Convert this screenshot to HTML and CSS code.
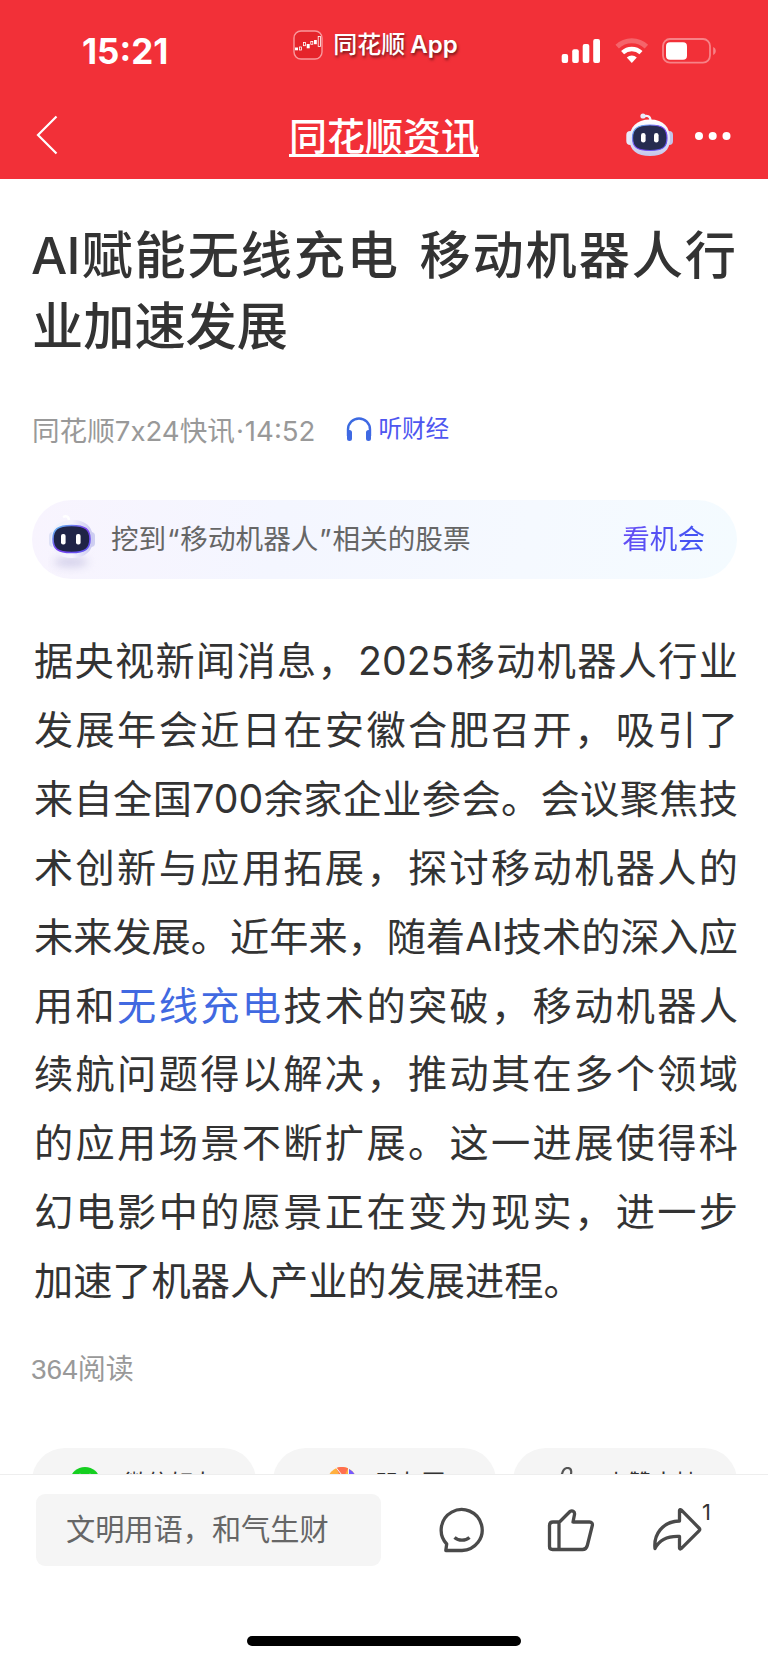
FILE: index.html
```html
<!DOCTYPE html>
<html lang="zh-CN">
<head>
<meta charset="utf-8">
<title>同花顺资讯</title>
<link rel="stylesheet" href="styles.css">
</head>
<body>
  <svg class="defs" width="0" height="0">
    <defs>
      <linearGradient id="shell" x1="0" y1="0" x2="0" y2="1">
        <stop offset="0" stop-color="#ffffff"/>
        <stop offset="0.5" stop-color="#e8e8f8"/>
        <stop offset="1" stop-color="#c4c6ec"/>
      </linearGradient>
      <linearGradient id="shell-light" x1="0" y1="0" x2="1" y2="0">
        <stop offset="0" stop-color="#eef0fc"/>
        <stop offset="0.5" stop-color="#f4f3fd"/>
        <stop offset="1" stop-color="#c9c8f0"/>
      </linearGradient>
      <linearGradient id="rim" x1="0" y1="0" x2="1" y2="1">
        <stop offset="0" stop-color="#5fc4f0"/>
        <stop offset="0.5" stop-color="#7a3ff0"/>
        <stop offset="1" stop-color="#5a5cf0"/>
      </linearGradient>
      <linearGradient id="phones" x1="0" y1="0" x2="1" y2="0">
        <stop offset="0" stop-color="#3a6be0"/>
        <stop offset="1" stop-color="#4068e4"/>
      </linearGradient>
    </defs>
  </svg>

  <div id="header">
    <div class="status-bar">
      <span class="clock">15:21</span>
      <div class="app-name">
        <svg width="30" height="30" viewBox="0 0 30 30">
          <rect x="1" y="1" width="28" height="28" rx="7" fill="#e5242b" stroke="#f9989c" stroke-width="1.4"/>
          <g fill="#fff">
            <rect x="2" y="17.5" width="3" height="2.8"/>
            <rect x="13.7" y="14" width="3" height="4.3"/>
            <rect x="21" y="10" width="2.8" height="4.2"/>
          </g>
          <g fill="none" stroke="#fff" stroke-width="0.8">
            <rect x="6.5" y="17" width="2" height="3"/>
            <rect x="10.4" y="12.5" width="2" height="3.2"/>
            <rect x="17.8" y="11.5" width="2" height="2.8"/>
            <rect x="25.2" y="6.5" width="2.2" height="10"/>
          </g>
        </svg>
        <span>同花顺<b>App</b></span>
      </div>
      <div class="signals">
        <svg width="40" height="26" viewBox="0 0 40 26" fill="#fff">
          <rect x="0.7" y="16" width="6.4" height="9" rx="2"/>
          <rect x="11.2" y="11.3" width="6.6" height="13.7" rx="2"/>
          <rect x="21.7" y="6" width="6.6" height="19" rx="2"/>
          <rect x="32.2" y="1" width="6.8" height="24" rx="2"/>
        </svg>
        <svg width="34" height="26" viewBox="0 0 34 26" fill="none">
          <path d="M2.2 8.6a21 21 0 0 1 29.2 0" stroke="#fff" stroke-opacity=".25" stroke-width="5"/>
          <path d="M7.6 14.6a13.4 13.4 0 0 1 18.4 0" stroke="#fff" stroke-width="4.4"/>
          <path d="M11.8 19.6a7.2 7.2 0 0 1 10 0l-5 5.4z" fill="#fff"/>
        </svg>
        <svg width="55" height="26" viewBox="0 0 55 26">
          <rect x="1" y="1" width="47" height="23.6" rx="7" fill="none" stroke="#fff" stroke-opacity=".4" stroke-width="1.8"/>
          <rect x="4" y="4.2" width="21" height="17.6" rx="4" fill="#fff"/>
          <path d="M51.2 9c3.4 1.4 3.4 6.4 0 8z" fill="#fff" fill-opacity=".4"/>
        </svg>
      </div>
    </div>

    <div class="nav-bar">
      <svg width="24" height="42" viewBox="0 0 24 42" fill="none" stroke="#fff" stroke-width="2.2">
        <path d="M21.5 2.5L3 21l18.5 18.5"/>
      </svg>
      <h1>同花顺资讯</h1>
      <div class="nav-actions">
        <svg width="48" height="46" viewBox="0 0 48 46">
          <path d="M17 4.5c4-1.5 7.5-.5 7.5 4" fill="none" stroke="#f3f0fb" stroke-width="2.2"/>
          <circle cx="17" cy="4" r="2.6" fill="#e8eafa"/>
          <rect x="0.3" y="19" width="8" height="14" rx="4" fill="#e9eafa"/>
          <rect x="39.5" y="19" width="7.5" height="14" rx="4" fill="#c3c4ea"/>
          <path d="M24 7.5c14 0 20 8 20 19.500S37 44 24 44 3.500 38.500 3.500 27 10 7.500 24 7.500z" fill="url(#shell)"/>
          <path d="M24 13c13 0 17 4 17 13s-4 12.500-17 12.500S6.500 35 6.500 26 11 13 24 13z" fill="#262c50" stroke="url(#rim)" stroke-width="1.2"/>
          <rect x="15" y="21" width="4.6" height="9.5" rx="2.3" fill="#fff"/>
          <rect x="28" y="21" width="4.6" height="9.5" rx="2.3" fill="#fff"/>
        </svg>
        <svg class="dots" width="38" height="10" viewBox="0 0 38 10" fill="#fff">
          <circle cx="5" cy="5" r="4"/>
          <circle cx="18.7" cy="5" r="4"/>
          <circle cx="32.5" cy="5" r="4"/>
        </svg>
      </div>
    </div>
  </div>

  <div id="article">
    <h2><span class="latin">AI</span>赋能无线充电 移动机器人行业加速发展</h2>

    <div class="meta">
      <span class="source">同花顺7x24快讯<i>·</i>14:52</span>
      <a class="listen">
        <svg width="26" height="24" viewBox="0 0 26 24" fill="none" stroke="url(#phones)">
          <path d="M2 19v-6.500a11 11 0 0 1 22 0V19" stroke-width="2.4"/>
          <path d="M3.500 15.500v6M22.500 15.500v6" stroke="#3f69e3" stroke-width="5" stroke-linecap="round"/>
        </svg>
        <span>听财经</span>
      </a>
    </div>

    <div class="banner">
      <svg width="48" height="62" viewBox="0 0 48 62">
        <ellipse class="shadow" cx="23" cy="49" rx="17" ry="5" fill="#d3d0ea"/>
        <path d="M15 4c3-1.500 6-1 6 4" fill="none" stroke="#fff" stroke-width="2.5"/>
        <rect x="1" y="19" width="8" height="15" rx="4" fill="#dfe2f6"/>
        <rect x="39" y="19" width="8" height="15" rx="4" fill="#cfcff2"/>
        <path d="M24 7c15 0 21 8 21 19.500S37 45 24 45 3 38 3 26.500 10 7 24 7z" fill="url(#shell-light)"/>
        <path d="M23.500 12.500c14 0 18.500 4 18.500 13.500s-4.500 13.500-18.500 13.500S5 35.500 5 26s4.500-13.500 18.500-13.500z" fill="#1f2447" stroke="url(#rim)" stroke-width="1.6"/>
        <rect x="13" y="21" width="4.6" height="10.5" rx="2" fill="#fff"/>
        <rect x="28" y="21" width="4.6" height="10.5" rx="2" fill="#fff"/>
      </svg>
      <span class="banner-text">挖到<i>“</i>移动机器人<i>”</i>相关的股票</span>
      <a>看机会</a>
    </div>

    <p>据央视新闻消息，2025移动机器人行业发展年会近日在安徽合肥召开，吸引了来自全国700余家企业参会。会议聚焦技术创新与应用拓展，探讨移动机器人的未来发展。近年来，随着AI技术的深入应用和<a>无线充电</a>技术的突破，移动机器人续航问题得以解决，推动其在多个领域的应用场景不断扩展。这一进展使得科幻电影中的愿景正在变为现实，进一步加速了机器人产业的发展进程。</p>

    <div class="reads">364阅读</div>

    <div class="share-row">
      <button>
        <svg width="30" height="30" viewBox="0 0 30 30">
          <ellipse cx="15" cy="13" rx="14.5" ry="13" fill="#15cf20"/>
          <circle cx="10" cy="8.5" r="1.8" fill="#fff"/>
          <circle cx="20" cy="8.5" r="1.8" fill="#fff"/>
        </svg>
        <span>微信好友</span>
      </button>
      <button class="moments">
        <svg width="30" height="30" viewBox="0 0 30 30">
          <circle cx="15" cy="14.5" r="14.5" fill="#ffb03f"/>
          <path d="M15 14.500L9.500 1.100A14.500 14.500 0 0 1 21 1.300z" fill="#ff6f4f"/>
          <path d="M21 1.500a14.500 14.500 0 0 1 8.500 13H21z" fill="#7659ff"/>
          <path d="M9 .5l11 14M21.500.5v14" stroke="#f5f5f5" stroke-width="1"/>
        </svg>
        <span>朋友圈</span>
      </button>
      <button>
        <svg width="30" height="30" viewBox="0 0 30 30" fill="none" stroke="#555" stroke-width="2.2">
          <path d="M2 13h5l4-6c1-4 2.500-6 5.500-6 5 0 4 5 2.500 11h9l-3 16H2z"/>
        </svg>
        <span>点赞支持</span>
      </button>
    </div>
  </div>

  <div id="bottom-bar">
    <div class="comment-row">
      <div class="comment-input">文明用语，和气生财</div>
      <div class="actions">
        <svg width="50" height="50" viewBox="0 0 50 50">
          <path d="M25 45.500H8.800l.9-6.500A20.500 20.500 0 1 1 25 45.500z"/>
          <path d="M17.500 32.500c4 3.600 11 3.600 15 0"/>
        </svg>
        <svg width="50" height="50" viewBox="0 0 50 50">
          <path d="M14.500 17L25 6.500c2.500-1.500 5 .2 4.500 3L28 17h16.500c2.200 0 3.300 1.500 2.800 3.500l-5 20c-.8 3-2.500 4-4.800 4H7.500C5.500 44.500 4.500 43.500 4.500 41.500V20.500C4.500 18 5.500 17 8 17zM14 17v27"/>
        </svg>
        <div class="share">
          <svg width="50" height="50" viewBox="0 0 50 50">
            <path d="M27.500 5.500c0-1 1-1.200 1.700-.6L47 23c1 1 1 1.800 0 2.800L29.200 43.600c-.8.7-1.700.4-1.700-.6V31.500C17 31 8 34 3 43.500 1.500 30 10 16.500 27.500 16z"/>
          </svg>
          <span class="count">1</span>
        </div>
      </div>
    </div>
    <div class="home-indicator"></div>
  </div>
</body>
</html>
```
FILE: styles.css
```css
* {
  box-sizing: border-box;
}

body {
  margin: 0;
  height: 1663px;
  display: flex;
  flex-direction: column;
  overflow: hidden;
  background-color: #fff;
  color: #333;
  font-family: Inter, "Noto Sans CJK SC", sans-serif;
  text-spacing-trim: space-all;
}

.defs {
  position: absolute;
}

svg {
  display: block;
  flex: none;
}

a {
  color: #4169e1;
  text-decoration: none;
}

i {
  font-style: normal;
}

#header {
  flex: none;
  height: 179px;
  background-color: #f23038;
  color: #fff;
}

.status-bar {
  height: 90px;
  display: grid;
  grid-template-columns: 1fr auto 1fr;
  padding: 0 51px 0 34px;
}

.clock {
  margin-top: 31px;
  padding-left: 48px;
  font-size: 35px;
  line-height: 41px;
  font-weight: 700;
}

.app-name {
  display: flex;
  align-items: center;
  gap: 10px;
  height: 30px;
  margin-top: 30px;
  font-size: 24px;
  line-height: 28px;
  font-weight: 500;
  text-shadow: 1px 2px 3px rgba(0, 0, 0, 0.55);
  white-space: nowrap;
}

.app-name b {
  margin-left: 5px;
  font-weight: 600;
}

.signals {
  display: flex;
  justify-content: flex-end;
  gap: 13.5px;
  margin-top: 38px;
}

.nav-bar {
  height: 89px;
  display: grid;
  grid-template-columns: 1fr auto 1fr;
  padding: 0 36px;
}

.nav-bar > svg {
  margin: 24px 0 0 -1px;
}

.nav-bar h1 {
  margin: 18px 0 0;
  font-size: 38px;
  line-height: 56px;
  font-weight: 500;
  text-decoration: underline;
  text-decoration-thickness: 3px;
  text-decoration-skip-ink: none;
  text-underline-offset: 4px;
}

.nav-actions {
  display: flex;
  justify-content: flex-end;
  align-items: center;
  gap: 20px;
  height: 46px;
  margin-top: 22px;
}

.nav-actions .dots {
  margin-top: 2px;
}

#article {
  flex: 1;
  min-height: 0;
  padding: 41px 31px 0 32px;
  overflow: hidden;
}

h2 {
  margin: 0;
  padding-right: 1px;
  font-size: 51.2px;
  line-height: 71px;
  font-weight: 500;
  text-align: justify;
  word-spacing: 4px;
}

h2 .latin {
  letter-spacing: -0.8px;
  margin-left: -1px;
}

.meta {
  display: flex;
  gap: 31px;
  height: 40px;
  margin-top: 49px;
  line-height: 40px;
}

.source {
  color: #999;
  font-size: 27.6px;
}

.source i {
  margin: 0 1px;
}

.listen {
  display: flex;
  align-items: center;
  gap: 6px;
  height: 36px;
  color: #4e56f0;
  font-size: 23.6px;
}

.listen svg {
  margin-top: -1px;
}

.banner {
  display: flex;
  align-items: center;
  height: 79px;
  margin-top: 49px;
  padding: 0 32px 0 16px;
  border-radius: 40px;
  background: linear-gradient(100deg, #f8f4fe 0%, #f4f6ff 35%, #f5f9ff 70%, #f4fbff 100%);
  font-size: 27.6px;
  line-height: 40px;
}

.banner svg {
  margin-top: 8px;
}

.banner .shadow {
  filter: blur(4px);
}

.banner-text {
  flex: 1;
  margin: -2px 0 0 15px;
  color: #666;
}

.banner-text i {
  margin: 0 1px;
}

.banner a {
  margin-top: -2px;
  background: linear-gradient(120deg, #6a4df5, #3a55f2);
  -webkit-background-clip: text;
  background-clip: text;
  color: transparent;
}

p {
  margin: 48px -1px 0 2px;
  font-size: 39.2px;
  line-height: 68.9px;
  text-align: justify;
}

.reads {
  margin: 34px 0 0 -1px;
  color: #999;
  font-family: "Liberation Sans", "Noto Sans CJK SC", sans-serif;
  font-size: 28px;
  line-height: 40px;
}

.share-row {
  display: grid;
  grid-template-columns: repeat(3, 1fr);
  gap: 17px;
  margin-top: 58px;
}

.share-row button {
  display: flex;
  justify-content: center;
  align-items: center;
  gap: 23px;
  height: 67px;
  padding: 0;
  border: none;
  border-radius: 33px;
  background-color: #f5f5f5;
  color: #333;
  font-family: inherit;
  font-size: 23.6px;
}

.share-row .moments {
  gap: 18px;
  padding-left: 3px;
}

#bottom-bar {
  flex: none;
  height: 189px;
  border-top: 1px solid #eee;
  background-color: #fff;
}

.comment-row {
  display: flex;
  margin: 19px 0 0 36px;
}

.comment-input {
  width: 345px;
  height: 72px;
  padding-left: 30px;
  border-radius: 9px;
  background-color: #f5f5f5;
  color: #666;
  font-size: 29.2px;
  line-height: 71px;
}

.actions {
  display: flex;
  gap: 57.5px;
  margin: 11px 0 0 56px;
}

.actions svg {
  fill: none;
  stroke: #4a4a4a;
  stroke-width: 3.3;
  stroke-linejoin: round;
}

.share {
  position: relative;
}

.count {
  position: absolute;
  top: -5px;
  left: 50px;
  font-size: 22px;
  line-height: 24px;
}

.home-indicator {
  width: 274px;
  height: 10px;
  margin: 70px auto 0;
  border-radius: 5px;
  background-color: #000;
}
```
